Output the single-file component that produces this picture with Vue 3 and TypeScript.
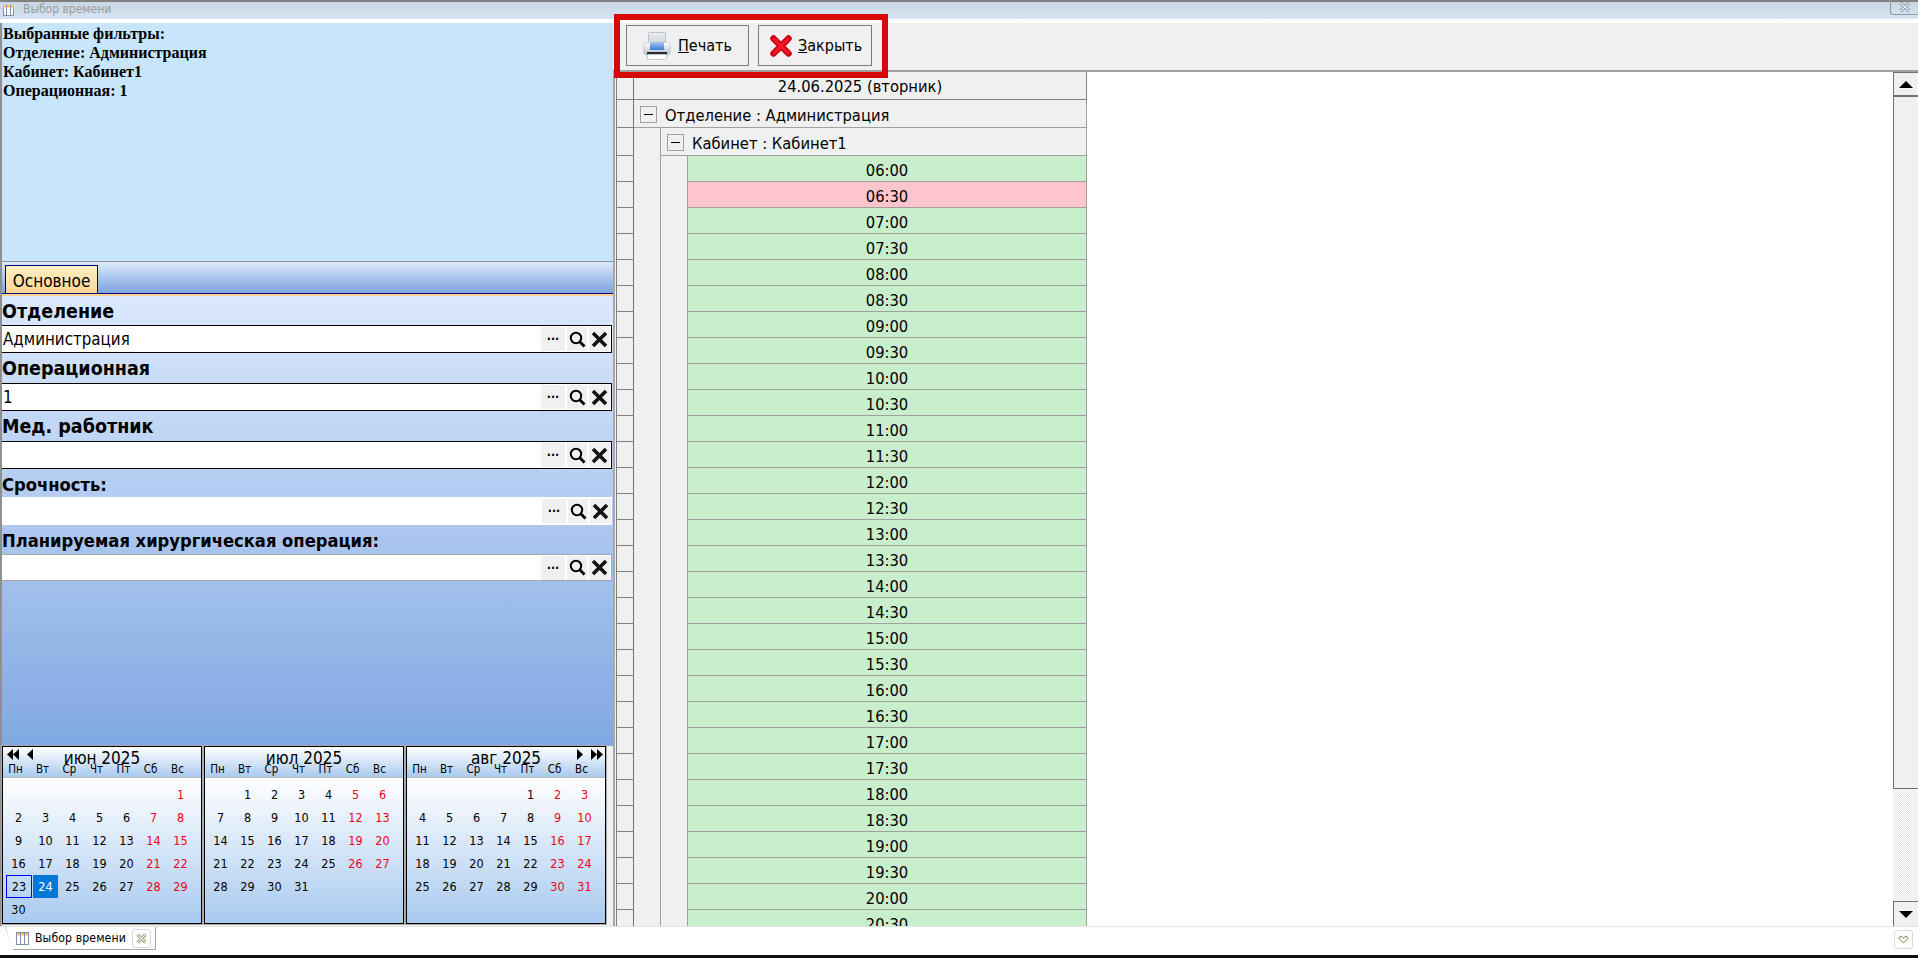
<script setup lang="ts">
interface Field { label: string; value: string; small: boolean; border: string; labelClass: string }
const fields: Field[] = [
  { label: 'Отделение', value: 'Администрация', small: false, border: 'dark', labelClass: 'h29' },
  { label: 'Операционная', value: '1', small: false, border: 'dark', labelClass: 'h30' },
  { label: 'Мед. работник', value: '', small: false, border: 'dark', labelClass: 'h30' },
  { label: 'Срочность:', value: '', small: true, border: 'none', labelClass: 'h28' },
  { label: 'Планируемая хирургическая операция:', value: '', small: true, border: 'light', labelClass: 'h29' },
]
const weekdays = ['Пн', 'Вт', 'Ср', 'Чт', 'Пт', 'Сб', 'Вс']
const months = [
  { title: 'июн 2025', start: 6, days: 30, prev: true, next: false },
  { title: 'июл 2025', start: 1, days: 31, prev: false, next: false },
  { title: 'авг 2025', start: 4, days: 31, prev: false, next: true },
]
function isWeekend(start: number, day: number): boolean {
  return (start + day - 1) % 7 >= 5
}
const times: string[] = []
for (let h = 6; h <= 20; h++) {
  const hh = String(h).padStart(2, '0')
  times.push(`${hh}:00`, `${hh}:30`)
}
const summary = ['Выбранные фильтры:', 'Отделение: Администрация', 'Кабинет: Кабинет1', 'Операционная: 1']
</script>

<template>
  <div class="app">
    <header class="titlebar">
      <svg class="title-icon" viewBox="0 0 11 11" width="11" height="11">
        <rect x="0.5" y="0.5" width="10" height="10" fill="#fff" stroke="#7f93a8" />
        <rect x="0" y="0" width="11" height="2.5" fill="#e8c95a" />
        <path d="M3.500 0v11M7.500 0v11" stroke="#7f93a8" />
      </svg>
      <span class="title-text">Выбор времени</span>
      <span class="title-close">
        <svg viewBox="0 0 12 10" width="12" height="10">
          <path d="M1.500 1l9 8M10.500 1l-9 8" stroke="#70808f" stroke-width="3" />
          <path d="M1.500 1l9 8M10.500 1l-9 8" stroke="#fff" stroke-width="1.200" />
        </svg>
      </span>
    </header>

    <main class="main">
      <section class="left">
        <div class="info">
          <div v-for="line in summary" :key="line" class="info-line">{{ line }}</div>
        </div>
        <div class="tabs">
          <div class="tab">Основное</div>
        </div>
        <div class="form">
          <div v-for="f in fields" :key="f.label" class="field">
            <div class="label" :class="[f.labelClass, { small: f.small }]">{{ f.label }}</div>
            <div class="input" :class="f.border">
              <span class="input-value">{{ f.value }}</span>
              <span class="ibtn dots">...</span>
              <span class="ibtn">
                <svg viewBox="0 0 17 17" width="17" height="17">
                  <circle cx="7" cy="7" r="5.200" fill="none" stroke="#000" stroke-width="2" />
                  <path d="M10.500 10.500l5 5" stroke="#000" stroke-width="2.800" />
                </svg>
              </span>
              <span class="ibtn last">
                <svg viewBox="0 0 17 17" width="17" height="17">
                  <path d="M2 2l13 13M15 2L2 15" stroke="#111" stroke-width="3.600" />
                </svg>
              </span>
            </div>
          </div>
        </div>
        <div class="cals">
          <div v-for="m in months" :key="m.title" class="cal">
            <div class="cal-head">
              <svg v-if="m.prev" class="nav nav-prev" viewBox="0 0 27 11" width="27" height="11">
                <path d="M6 0v11L0 5.500zM12 0v11L6 5.500zM26 0v11L20 5.500z" fill="#000" />
              </svg>
              <svg v-if="m.next" class="nav nav-next" viewBox="0 0 27 11" width="27" height="11">
                <path d="M1 0v11l6-5.500zM15 0v11l6-5.500zM21 0v11l6-5.500z" fill="#000" />
              </svg>
              <div class="cal-title">{{ m.title }}</div>
              <div class="cal-week">
                <span v-for="w in weekdays" :key="w">{{ w }}</span>
              </div>
            </div>
            <div class="cal-body">
              <span v-for="n in m.start" :key="'e' + n" class="day"></span>
              <span
                v-for="d in m.days"
                :key="d"
                class="day"
                :class="{
                  red: isWeekend(m.start, d),
                  today: m.prev && d === 23,
                  selected: m.prev && d === 24,
                }"
              >{{ d }}</span>
            </div>
          </div>
        </div>
      </section>

      <section class="right">
        <div class="toolbar">
          <button class="btn print" type="button">
            <svg viewBox="0 0 30 30" width="30" height="30">
              <defs>
                <linearGradient id="pbody" x1="0" y1="0" x2="0" y2="1">
                  <stop offset="0" stop-color="#fdfdfe" />
                  <stop offset="1" stop-color="#b4bbc3" />
                </linearGradient>
                <linearGradient id="pblue" x1="0" y1="0" x2="0" y2="1">
                  <stop offset="0" stop-color="#a6c8ee" />
                  <stop offset="1" stop-color="#3c7cd8" />
                </linearGradient>
                <linearGradient id="ppaper" x1="0" y1="0" x2="0" y2="1">
                  <stop offset="0" stop-color="#eceff2" />
                  <stop offset="1" stop-color="#cdd3d9" />
                </linearGradient>
              </defs>
              <rect x="6.500" y="1.500" width="17" height="12" rx="1" fill="url(#ppaper)" stroke="#bcc3ca" />
              <rect x="1.500" y="11.500" width="27" height="12.500" rx="3" fill="url(#pbody)" stroke="#cfd4da" />
              <rect x="8" y="11" width="14" height="8" fill="url(#pblue)" />
              <rect x="5" y="21" width="20" height="2.500" fill="#26292e" />
              <rect x="5.500" y="23.500" width="19" height="5" rx="1" fill="#fbfcfd" stroke="#c3c9cf" />
            </svg>
            <span><u>П</u>ечать</span>
          </button>
          <button class="btn close" type="button">
            <svg viewBox="0 0 22 22" width="22" height="22">
              <path d="M3.500 3.500l15 15M18.500 3.500l-15 15" stroke="#d00010" stroke-width="6.500" stroke-linecap="round" />
              <path d="M4 4l14 14M18 4L4 18" stroke="#f01828" stroke-width="3" stroke-linecap="round" />
            </svg>
            <span><u>З</u>акрыть</span>
          </button>
        </div>

        <div class="grid-wrap">
          <div class="grid">
            <div class="row row-date">
              <div class="sel"></div>
              <div class="date-cell">24.06.2025 (вторник)</div>
            </div>
            <div class="row row-group">
              <div class="sel"></div>
              <div class="group-cell dept">
                <span class="toggle"></span>
                <span class="group-text">Отделение : Администрация</span>
              </div>
            </div>
            <div class="row row-group">
              <div class="sel"></div>
              <div class="indent"></div>
              <div class="group-cell cab">
                <span class="toggle"></span>
                <span class="group-text">Кабинет : Кабинет1</span>
              </div>
            </div>
            <div v-for="t in times" :key="t" class="row row-time">
              <div class="sel"></div>
              <div class="indent"></div>
              <div class="indent"></div>
              <div class="time" :class="{ busy: t === '06:30' }">{{ t }}</div>
            </div>
          </div>
          <div class="scrollbar">
            <div class="sb-btn up"><span class="tri-up"></span></div>
            <div class="sb-thumb"></div>
            <div class="sb-track"></div>
            <div class="sb-btn down"><span class="tri-down"></span></div>
          </div>
        </div>
      </section>

      <div class="highlight"></div>
    </main>

    <footer class="tabbar">
      <div class="doc-tab">
        <svg class="doc-icon" viewBox="0 0 13 13" width="13" height="13">
          <rect x="0.500" y="0.500" width="12" height="12" fill="#fff" stroke="#7f93a8" />
          <rect x="1" y="1" width="11" height="2.500" fill="#e8c95a" />
          <path d="M4.500 0v13M8.500 0v13" stroke="#7f93a8" />
        </svg>
        <span class="doc-text">Выбор времени</span>
        <span class="mini">
          <svg viewBox="0 0 11 11" width="11" height="11">
            <path d="M1.500 1.500l8 8M9.500 1.500l-8 8" stroke="#8a7a4a" stroke-width="3" />
            <path d="M1.500 1.500l8 8M9.500 1.500l-8 8" stroke="#fff" stroke-width="1.200" />
          </svg>
        </span>
      </div>
      <span class="mini heart">
        <svg viewBox="0 0 11 9" width="11" height="9">
          <path d="M5.500 8L1 3.500 2.500 1 5.500 3 8.500 1 10 3.500z" fill="#fff" stroke="#8a7a4a" />
        </svg>
      </span>
    </footer>
    <div class="bottom-edge"></div>
  </div>
</template>

<style scoped>
.app {
  width: 1918px;
  height: 958px;
  display: flex;
  flex-direction: column;
  overflow: hidden;
  background: #fff;
  color: #000;
  font-family: "DejaVu Sans Condensed", "DejaVu Sans", sans-serif;
  font-stretch: condensed;
}
.titlebar {
  height: 19px;
  margin-bottom: 4px;
  flex: none;
  display: flex;
  align-items: center;
  box-sizing: border-box;
  border-top: 2px solid #808080;
  background: linear-gradient(#c9d6e3, #d6e5f3);
  padding-left: 3px;
  position: relative;
}
.title-text {
  margin-left: 9px;
  color: #9b9b9b;
  font-size: 12px;
  line-height: 16px;
  margin-top: -3px;
}
.title-close {
  position: absolute;
  right: 0;
  top: -2px;
  width: 28px;
  height: 15px;
  box-sizing: border-box;
  border: 1px solid #8b99a8;
  border-top: 0;
  border-right: 0;
  border-radius: 0 0 0 3px;
  display: flex;
  align-items: center;
  justify-content: center;
}
.main {
  height: 903px;
  flex: none;
  display: flex;
  position: relative;
}
.left {
  width: 613px;
  flex: none;
  box-sizing: border-box;
  border-left: 2px solid #909090;
  display: flex;
  flex-direction: column;
  background: #f0f0f0;
}
.info {
  height: 239px;
  flex: none;
  box-sizing: border-box;
  border-bottom: 1px solid #909090;
  background: #c8e6fb;
  padding: 1px 0 0 1px;
  font-family: "Liberation Serif", serif;
  font-weight: bold;
  font-size: 16px;
  line-height: 19px;
}
.tabs {
  height: 34px;
  flex: none;
  box-sizing: border-box;
  background: linear-gradient(#dce9fb, #83a8df 90%);
  border-bottom: 2px solid #ffd292;
  padding: 3px 0 0 3px;
  position: relative;
}
.tabs::after {
  content: "";
  position: absolute;
  left: 0;
  right: 0;
  bottom: 0;
  height: 1px;
  background: #00007f;
}
.tab {
  width: 93px;
  height: 29px;
  box-sizing: border-box;
  border: 1px solid #00007f;
  border-bottom: 0;
  background: linear-gradient(#fff0c4, #ffd292);
  font-size: 17px;
  line-height: 30px;
  text-align: center;
}
.form {
  height: 450px;
  flex: none;
  background: linear-gradient(#dbe9fc, #80a8e2);
}
.label {
  font-weight: bold;
  font-size: 19.500px;
  box-sizing: border-box;
  display: flex;
  align-items: center;
  white-space: nowrap;
  padding-top: 1px;
}
.label.small {
  font-size: 18.200px;
  padding-top: 2px;
}
.h28 { height: 28px; }
.h29 { height: 29px; }
.h30 { height: 30px; }
.input {
  height: 28px;
  width: 610px;
  box-sizing: border-box;
  display: flex;
  align-items: center;
  background: #fff;
  padding-right: 1px;
}
.input.dark { border: 1px solid #000; border-left: 0; }
.input.light { border: 1px solid #a8a8a8; border-left: 0; height: 27px; }
.input-value {
  flex: 1;
  font-size: 16.800px;
  padding-left: 1px;
}
.ibtn {
  width: 20px;
  height: 24px;
  margin-left: 2px;
  background: #f0f0f0;
  display: flex;
  align-items: center;
  justify-content: center;
  flex: none;
}
.ibtn.dots {
  width: 24px;
  font-size: 12px;
  font-weight: bold;
  line-height: 16px;
  padding-bottom: 6px;
  box-sizing: border-box;
}
.ibtn.last { width: 21px; }
.cals {
  flex: 1;
  display: flex;
  gap: 2px;
  padding-bottom: 2px;
  box-sizing: border-box;
  align-items: stretch;
}
.cal {
  width: 200px;
  box-sizing: border-box;
  border: 1px solid #000;
  display: flex;
  flex-direction: column;
  background: #b8b8b8;
  outline: 1px solid #aaa;
}
.cal-head {
  height: 30px;
  flex: none;
  background: linear-gradient(#fff, #a9caef);
  margin-bottom: 1px;
  position: relative;
  overflow: hidden;
}
.nav {
  position: absolute;
  top: 2px;
}
.nav-prev { left: 4px; }
.nav-next { right: 2px; }
.cal-title {
  text-align: center;
  font-size: 17px;
  line-height: 18px;
  height: 15px;
  padding-top: 2px;
  box-sizing: border-box;
}
.cal-week {
  display: grid;
  grid-template-columns: repeat(7, 27px);
  margin-left: -1px;
  font-size: 11.500px;
  line-height: 14px;
  text-align: center;
}
.cal-body {
  flex: 1;
  background: linear-gradient(#fff, #a9caef);
  display: grid;
  grid-template-columns: repeat(7, 27px);
  grid-auto-rows: 23px;
  padding: 5px 0 0 2px;
  align-content: start;
}
.day {
  font-size: 12.500px;
  line-height: 23px;
  text-align: center;
  box-sizing: border-box;
}
.day.red { color: #f00018; }
.day.today {
  outline: 1px solid #0000ff;
  outline-offset: -1px;
  margin: 0 0 0 1px;
}
.day.selected {
  background: #0078d7;
  color: #fff;
  margin: 0 1px;
}
.right {
  flex: 1;
  min-width: 0;
  display: flex;
  flex-direction: column;
}
.toolbar {
  height: 49px;
  flex: none;
  box-sizing: border-box;
  background: #f0f0f0;
  border-bottom: 2px solid #a0a0a0;
  display: flex;
  align-items: flex-start;
  padding: 2px 0 0 13px;
  gap: 9px;
}
.btn {
  height: 41px;
  box-sizing: border-box;
  border: 1px solid #7d7d7d;
  background: #f0f0f0;
  display: flex;
  align-items: center;
  font: inherit;
  font-size: 16px;
  color: #000;
  padding: 0;
}
.btn.print { width: 123px; padding-left: 15px; gap: 6px; }
.btn.close { width: 114px; padding-left: 11px; gap: 6px; }
.grid-wrap {
  height: 854px;
  flex: none;
  display: flex;
  overflow: hidden;
  background: #fff;
}
.grid {
  width: 1280px;
  flex: none;
  border-left: 2px solid #a8a8a8;
  box-sizing: border-box;
  padding-left: 1px;
  background: linear-gradient(#f0f0f0, #f0f0f0) 0 0 / 471px 100% no-repeat;
  font-size: 16.400px;
}
.row {
  display: flex;
  width: 471px;
  box-sizing: border-box;
  flex: none;
}
.sel {
  width: 18px;
  flex: none;
  box-sizing: border-box;
  border-left: 1px solid #808080;
  border-right: 1px solid #707070;
  border-bottom: 1px solid #808080;
  background: #f0f0f0;
}
.row-date { height: 28px; }
.date-cell {
  flex: 1;
  box-sizing: border-box;
  border-right: 1px solid #808080;
  border-bottom: 1px solid #808080;
  text-align: center;
  line-height: 29px;
}
.row-group { height: 28px; }
.group-cell {
  flex: 1;
  display: flex;
  align-items: center;
  border-right: 1px solid #a0a0a0;
  border-bottom: 1px solid #a0a0a0;
  box-sizing: border-box;
  padding-top: 2px;
}
.group-cell.dept { padding-left: 6px; }
.group-cell.cab { padding-left: 6px; }
.toggle {
  width: 17px;
  height: 17px;
  box-sizing: border-box;
  border: 1px solid #a0a0a0;
  background: #f0f0f0;
  flex: none;
  position: relative;
}
.toggle::after {
  content: "";
  position: absolute;
  left: 3px;
  right: 3px;
  top: 7px;
  height: 1px;
  background: #000;
}
.group-text { margin-left: 8px; padding-top: 2px; }
.indent {
  width: 27px;
  flex: none;
  box-sizing: border-box;
  border-right: 1px solid #a0a0a0;
}
.row-time { height: 26px; }
.time {
  flex: 1;
  box-sizing: border-box;
  background: #c8eecc;
  border-right: 1px solid #a0a0a0;
  border-bottom: 1px solid #a0a0a0;
  text-align: center;
  line-height: 29px;
}
.time.busy { background: #fec5cc; }
.scrollbar {
  width: 25px;
  flex: none;
  display: flex;
  flex-direction: column;
  background: #f0f0f0;
}
.sb-btn {
  height: 25px;
  flex: none;
  box-sizing: border-box;
  display: flex;
  align-items: center;
  justify-content: center;
  background: #f0f0f0;
  border-left: 1px solid #707070;
}
.sb-btn.up { border-bottom: 2px solid #707070; border-top: 1px solid #707070; }
.sb-btn.down { border-top: 1px solid #707070; height: 25px; }
.tri-up, .tri-down {
  width: 0;
  height: 0;
  border-left: 7px solid transparent;
  border-right: 7px solid transparent;
}
.tri-up { border-bottom: 7px solid #000; }
.tri-down { border-top: 7px solid #000; }
.sb-thumb {
  height: 692px;
  flex: none;
  box-sizing: border-box;
  border-left: 1px solid #707070;
  border-bottom: 1px solid #707070;
  background: #f0f0f0;
}
.sb-track {
  flex: 1;
  background-color: #fff;
  background-image: repeating-conic-gradient(#e8e8e8 0 25%, #fff 0 50%);
  background-size: 2px 2px;
}
.highlight {
  position: absolute;
  left: 614px;
  top: -9px;
  width: 274px;
  height: 64px;
  box-sizing: border-box;
  border: 6px solid #d80808;
  pointer-events: none;
}
.tabbar {
  height: 29px;
  flex: none;
  box-sizing: border-box;
  border-top: 1px solid #e4e4e4;
  background: #fff;
  display: flex;
  justify-content: space-between;
  align-items: flex-start;
  padding-right: 5px;
}
.doc-tab {
  margin-left: 5px;
  width: 151px;
  height: 23px;
  box-sizing: border-box;
  border-right: 1px solid #a8a8a8;
  border-bottom: 1px solid #a8a8a8;
  display: flex;
  align-items: center;
  padding-left: 11px;
  clip-path: polygon(0 0, 100% 0, 100% 100%, 8px 100%);
  position: relative;
}
.doc-tab::before {
  content: "";
  position: absolute;
  left: 3px;
  top: -2px;
  height: 27px;
  width: 1px;
  background: #a8a8a8;
  transform: rotate(-17deg);
}
.doc-text {
  margin-left: 6px;
  font-size: 12.200px;
  flex: none;
  width: 97px;
  letter-spacing: 0.1px;
}
.mini {
  width: 19px;
  height: 19px;
  box-sizing: border-box;
  border: 1px solid #d8d8d8;
  border-radius: 3px;
  display: flex;
  align-items: center;
  justify-content: center;
  flex: none;
}
.heart { margin-top: 3px; }
.bottom-edge {
  height: 3px;
  flex: none;
  background: #111;
}
</style>
